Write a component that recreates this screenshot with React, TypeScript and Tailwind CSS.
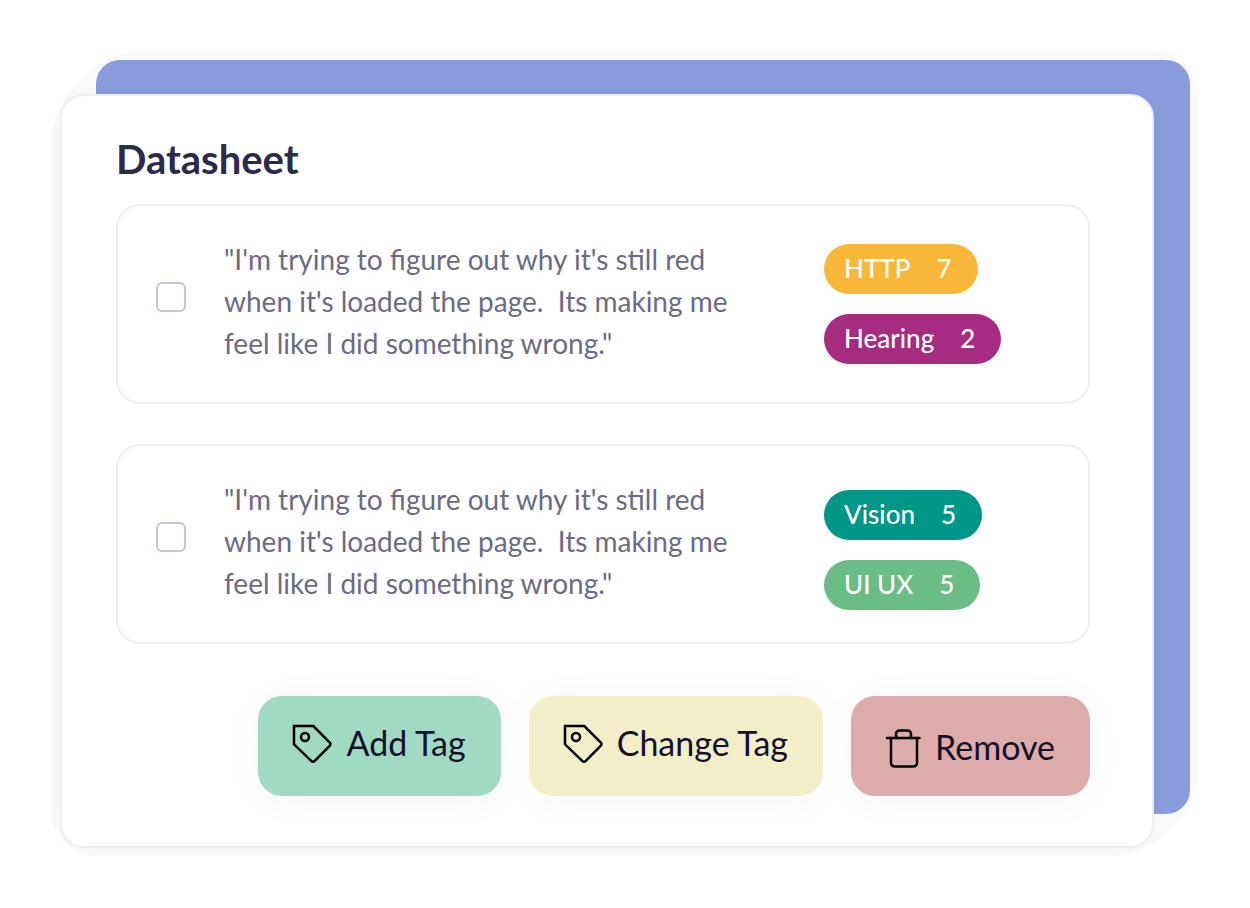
import React from 'react';
import clsx from 'clsx';

interface Tag {
  label: string;
  count: number;
  color: string;
}

interface Entry {
  id: string;
  quote: string;
  tags: Tag[];
  tagsClass?: string;
}

const QUOTE =
  '"I\'m trying to figure out why it\'s still red when it\'s loaded the page.\u00a0 Its making me feel like I did something wrong."';

const entries: Entry[] = [
  {
    id: 'entry-1',
    quote: QUOTE,
    tags: [
      { label: 'HTTP', count: 7, color: 'bg-[#f8b739]' },
      { label: 'Hearing', count: 2, color: 'bg-[#a62c82]' },
    ],
  },
  {
    id: 'entry-2',
    quote: QUOTE,
    tags: [
      { label: 'Vision', count: 5, color: 'bg-[#009688]' },
      { label: 'UI UX', count: 5, color: 'bg-[#6cbc85]' },
    ],
    tagsClass: 'pt-3',
  },
];

const TagIcon = () => (
  <svg
    className="w-10 h-10 shrink-0"
    viewBox="0 0 40 40"
    fill="none"
    stroke="#000"
    strokeWidth="2.5"
    aria-hidden="true"
  >
    <path d="M2 2H21.3L37.6 18.3Q39.4 20.1 37.6 21.9L22.8 36.8Q21 38.6 19.2 36.8L2 20.3Z" />
    <circle cx="13" cy="13" r="4" />
  </svg>
);

const TrashIcon = () => (
  <svg
    className="w-9 h-10 shrink-0"
    viewBox="0 0 36 40"
    fill="none"
    stroke="#000"
    strokeWidth="2.5"
    strokeLinecap="round"
    aria-hidden="true"
  >
    <path d="M2 10H34.5" />
    <path d="M11 10V6.5Q11 2.5 15 2.5H22Q26 2.5 26 6.5V10" />
    <path d="M6 10V34.5Q6 38.5 10 38.5H28Q32 38.5 32 34.5V10" />
  </svg>
);

const TagPill = ({ label, count, color }: Tag) => (
  <span
    className={clsx(
      'flex items-center gap-[26px] h-[50px] pl-5 pr-[26px] pb-0.5 rounded-full text-[26px] font-medium text-white',
      color
    )}
  >
    <span>{label}</span>
    <span>{count}</span>
  </span>
);

const EntryCard = ({ id, quote, tags, tagsClass }: Entry) => (
  <li className="flex items-center min-h-[200px] rounded-3xl border-2 border-[#ededf3] pl-[38px] py-8">
    <input
      id={id}
      type="checkbox"
      className="appearance-none w-[30px] h-[30px] mb-3.5 shrink-0 rounded-md border-2 border-[#c5c4d9] bg-white checked:bg-[#889cdb]"
    />
    <label htmlFor={id} className="flex-1 pl-[38px] pr-14 pb-1.5 text-[28px] leading-[42px] text-[#6c6a84]">
      {quote}
    </label>
    <div className={clsx('w-[264px] shrink-0 flex flex-col items-start gap-5', tagsClass)}>
      {tags.map((tag) => (
        <TagPill key={tag.label} {...tag} />
      ))}
    </div>
  </li>
);

interface ActionButtonProps {
  icon: React.ReactNode;
  children: React.ReactNode;
  className: string;
}

const ActionButton: React.FC<ActionButtonProps> = ({ icon, children, className }) => (
  <button
    type="button"
    className={clsx(
      'flex items-center gap-3.5 h-[100px] pl-[34px] pr-[35px] rounded-3xl text-[34px] text-[#150f2c] shadow-[0_4px_40px_rgba(0,0,0,0.04)]',
      className
    )}
  >
    {icon}
    <span className="pb-1">{children}</span>
  </button>
);

export default function App() {
  return (
    <main className="min-h-screen bg-white p-[60px] font-['Lato',sans-serif]">
      {/* Faint halo around both sheets */}
      <div className="grid rounded-tl-[84px] rounded-br-[84px] rounded-tr-[36px] rounded-bl-[36px] bg-[#f9f9f9] shadow-[0_0_0_8px_#f9f9f9]">
        {/* Blue sheet peeking out behind the card */}
        <div className="col-start-1 row-start-1 ml-9 mb-[34px] rounded-3xl bg-[#889cdb]" />

        <section className="col-start-1 row-start-1 mt-[34px] mr-9 rounded-3xl border-2 border-[#ededf3] bg-white pt-10 pb-[50px] pl-[54px] pr-[62px] shadow-[0_0_20px_rgba(0,0,0,0.02)]">
          <h1 className="text-[40px] leading-[46px] font-bold text-[#2c2b4b]">Datasheet</h1>

          <ul className="mt-[22px] flex flex-col gap-10">
            {entries.map((entry) => (
              <EntryCard key={entry.id} {...entry} />
            ))}
          </ul>

          <div className="mt-[52px] flex flex-wrap justify-end gap-7">
            <ActionButton icon={<TagIcon />} className="bg-[#a0dac3] pb-1">
              Add Tag
            </ActionButton>
            <ActionButton icon={<TagIcon />} className="bg-[#f2eec8] pb-1">
              Change Tag
            </ActionButton>
            <ActionButton icon={<TrashIcon />} className="bg-[#deabab] pt-1">
              Remove
            </ActionButton>
          </div>
        </section>
      </div>
    </main>
  );
}
